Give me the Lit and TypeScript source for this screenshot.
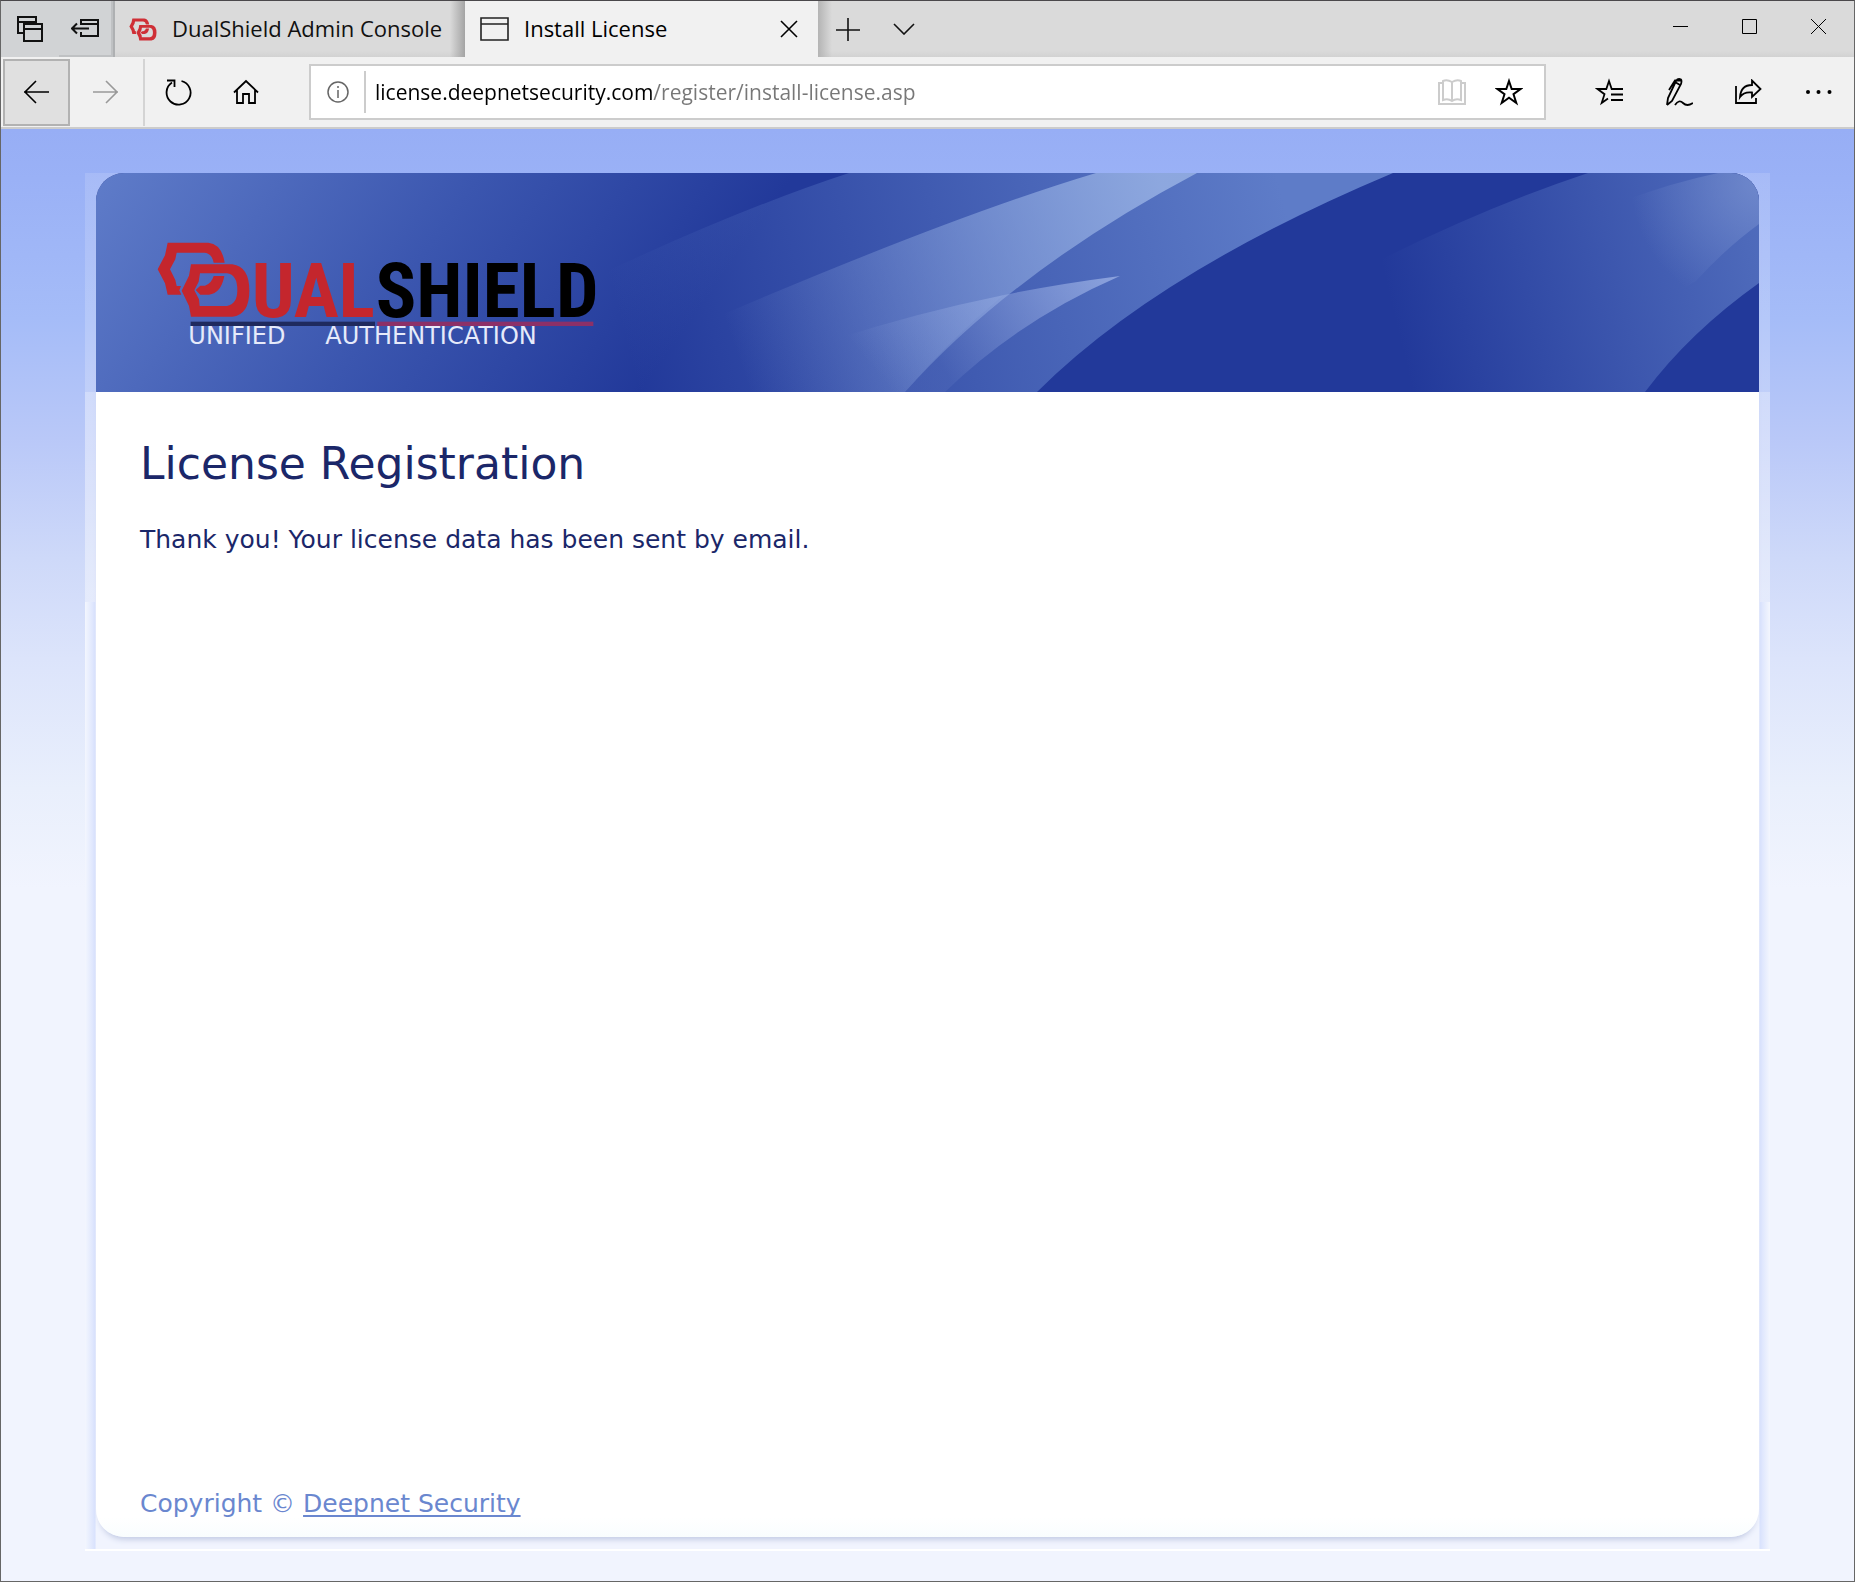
import { LitElement, html, css, svg } from "lit";
import { customElement } from "lit/decorators.js";

const hexPair = svg`
  <path fill-rule="evenodd" d="M68 38H190Q230 42 239 98H206Q200 69 178 68H95L91 88L75 118L91 150L95 168H108L103 181L109 194H68L60 160L38 118L60 76Z"/>
  <path d="M206 138H238Q228 190 192 194H166L152 180L166 167H180Q200 160 206 138Z"/>
  <path fill-rule="evenodd" d="M138 103H262Q313 110 313 182Q313 254 262 260H138L132 228L110 182L132 137ZM165 130L161 155L148 181L162 208L164 228H246Q277 222 277 181Q277 134 246 130Z"/>`;

@customElement("browser-chrome")
export class BrowserChrome extends LitElement {
  static styles = css`
    :host {
      display: block;
      font-family: "Open Sans", "Noto Sans", sans-serif;
      color: #111;
    }
    button {
      border: 0;
      padding: 0;
      margin: 0;
      background: none;
      color: inherit;
      font: inherit;
      display: flex;
      align-items: center;
      justify-content: center;
      flex: none;
    }
    svg {
      display: block;
      flex: none;
      fill: none;
      stroke: currentColor;
      stroke-width: 1.6;
    }
    .strip {
      display: flex;
      height: 56px;
      background: linear-gradient(#dadada 50px, #d2d2d2);
    }
    .shelf {
      display: flex;
      background: #d1d3d5;
      border-right: 2px solid #aeb0b2;
    }
    .shelf button {
      width: 58px;
    }
    .shelf .aside {
      box-sizing: border-box;
      width: 54px;
      border: solid #bfc1c3;
      border-width: 0 2px 2px 0;
    }
    .tab {
      display: flex;
      align-items: center;
      gap: 15px;
      width: 350px;
      box-sizing: border-box;
      padding: 0 14px;
      font-size: 22px;
      line-height: 30px;
      white-space: nowrap;
    }
    .tab.idle {
      background: linear-gradient(90deg, transparent 335px, #a4a4a4);
    }
    .tab.active {
      width: 353px;
      padding: 0 10px 0 15px;
      background: #f1f1f1;
      color: #000;
    }
    .tab .label {
      flex: 1;
      padding-bottom: 2px;
    }
    .tab .close {
      width: 38px;
      height: 38px;
    }
    .favicon {
      fill: #cf2f36;
      stroke: none;
    }
    .after {
      display: flex;
      flex: 1;
      padding-left: 2px;
      background: linear-gradient(90deg, #b4b4b4, transparent 14px);
    }
    .after button {
      width: 56px;
    }
    .window {
      display: flex;
      padding-right: 1px;
    }
    .window button {
      width: 69px;
      height: 50px;
    }
    .window svg {
      stroke-width: 1;
      color: #000;
    }
    .bar {
      display: flex;
      align-items: center;
      height: 70px;
      padding: 0 0 0 2px;
      background: #f1f1f1;
      border-bottom: 2px solid #ccc;
      color: #000;
    }
    .nav {
      width: 67px;
      height: 67px;
      box-sizing: border-box;
    }
    .back {
      background: #e0e0e0;
      border: 2px solid #b2b2b2;
    }
    .forward {
      width: 73px;
      color: #999;
    }
    .reload {
      border-left: 2px solid #d4d4d4;
      width: 67px;
    }
    .home {
      width: 71px;
    }
    .address {
      display: flex;
      align-items: center;
      flex: 1;
      height: 56px;
      box-sizing: border-box;
      margin: 0 28px;
      border: 2px solid #ccc;
      background: #fff;
    }
    .info {
      width: 53px;
      color: #666;
    }
    .rule {
      width: 2px;
      height: 42px;
      background: #ccc;
    }
    .url {
      flex: 1;
      min-width: 0;
      height: 40px;
      border: 0;
      outline: 0;
      padding: 0 0 0 9px;
      font-family: inherit;
      font-size: 21px;
      background: linear-gradient(90deg, #000 287px, #777 287px);
      background-clip: text;
      -webkit-background-clip: text;
      color: transparent;
    }
    .mark {
      width: 57px;
      height: 50px;
    }
    .reader {
      color: #ccc;
    }
    .star {
      margin-right: 7px;
    }
    .tool {
      width: 70px;
      height: 67px;
    }
    .dots {
      fill: currentColor;
      stroke: none;
    }
  `;

  render() {
    return html`
      <header>
        <div class="strip">
          <div class="shelf">
            <button aria-label="Tabs you have set aside">
              <svg width="26" height="26" viewBox="0 0 26 26"><path stroke-width="2" d="M6 17H1V1H19V7M1 6H19M7 8H25V25H7ZM7 13H25"/></svg>
            </button>
            <button class="aside" aria-label="Set these tabs aside">
              <svg width="28" height="20" viewBox="0 0 28 20"><path stroke-width="2" d="M10 7V2H27V18H10V14M10 6H27M1 10.500H18M6 5.500L1 10.500L6 15.500"/></svg>
            </button>
          </div>
          <div class="tab idle">
            <svg class="favicon" width="28" height="23" viewBox="34 34 284 230">${hexPair}</svg>
            <span class="label">DualShield Admin Console</span>
          </div>
          <div class="tab active">
            <svg width="29" height="24" viewBox="0 0 29 24"><path stroke="#222" d="M1 1H28V23H1ZM1 7H28"/></svg>
            <span class="label">Install License</span>
            <button class="close" aria-label="Close tab">
              <svg width="18" height="18" viewBox="0 0 18 18"><path d="M1 1L17 17M17 1L1 17"/></svg>
            </button>
          </div>
          <div class="after">
            <button aria-label="New tab">
              <svg width="24" height="24" viewBox="0 0 24 24"><path d="M12 1V24M0 13H24"/></svg>
            </button>
            <button aria-label="Tab previews">
              <svg width="22" height="12" viewBox="0 0 22 12"><path d="M1 1L11 11L21 1"/></svg>
            </button>
          </div>
          <div class="window">
            <button aria-label="Minimize">
              <svg width="15" height="15" viewBox="0 0 15 15"><path d="M0 7.500H15"/></svg>
            </button>
            <button aria-label="Maximize">
              <svg width="15" height="15" viewBox="0 0 15 15"><path d="M.5 .5H14.500V14.500H.5Z"/></svg>
            </button>
            <button aria-label="Close window">
              <svg width="15" height="15" viewBox="0 0 15 15"><path d="M0 0L15 15M15 0L0 15"/></svg>
            </button>
          </div>
        </div>
        <nav class="bar">
          <button class="nav back" aria-label="Back">
            <svg width="28" height="24" viewBox="0 0 28 24"><path d="M1 12H26M13 1L2 12L13 23"/></svg>
          </button>
          <button class="nav forward" aria-label="Forward">
            <svg width="28" height="24" viewBox="0 0 28 24"><path d="M0 12H25M13 1L24 12L13 23"/></svg>
          </button>
          <button class="nav reload" aria-label="Refresh">
            <svg width="28" height="28" viewBox="0 0 28 28"><path stroke-width="1.800" d="M17.500 3A12 12 0 1 1 8 4.600M3 2.500H10.500V9"/></svg>
          </button>
          <button class="nav home" aria-label="Home">
            <svg width="26" height="26" viewBox="0 0 26 26"><path stroke-width="1.800" d="M1 13.500L13 2L25 13.500M4 11V24H10V15H16V24H22V11"/></svg>
          </button>
          <div class="address">
            <button class="info" aria-label="Site information">
              <svg width="22" height="22" viewBox="0 0 22 22"><circle cx="11" cy="11" r="10" stroke-width="1.500"/><path stroke-width="1.500" d="M11 9V17M11 5V7"/></svg>
            </button>
            <span class="rule"></span>
            <input class="url" type="text" aria-label="Address" spellcheck="false" .value=${"license.deepnetsecurity.com/register/install-license.asp"} />
            <button class="mark reader" aria-label="Reading view">
              <svg width="28" height="26" viewBox="0 0 28 26"><path stroke-width="2" d="M14 3Q9 0 5 2V21Q10 19 14 22Q18 19 23 21V2Q19 0 14 3V22M5 4H1V25H27V4H23"/></svg>
            </button>
            <button class="mark star" aria-label="Add to favorites">
              <svg width="28" height="28" viewBox="0 0 28 28"><path stroke-width="2" d="M14 3L16.700 11H25.500L18.500 16.200L21.300 25L14 19.800L6.700 25L9.500 16.200L2.500 11H11.300Z"/></svg>
            </button>
          </div>
          <button class="tool" aria-label="Hub">
            <svg width="28" height="28" viewBox="0 0 28 28"><path stroke-width="1.800" d="M28 11H16.700L14 3L11.300 11H2.500L9.500 16.200L6.700 25L13 20.500M16 16.500H28M16 22H28"/></svg>
          </button>
          <button class="tool" aria-label="Make a web note">
            <svg width="28" height="30" viewBox="0 0 28 30"><path stroke-width="1.800" d="M2 28L3 21L11 4Q13 1 16 2.500Q17 4 16 7L7 24L2 28M4 13L10 3.500H16M10 5L15 8M10 28Q14 22 18 26T28 26"/></svg>
          </button>
          <button class="tool" aria-label="Share">
            <svg width="30" height="26" viewBox="0 0 30 26"><path stroke-width="1.800" d="M2 7V24H22V19M6 18Q7 6 18 6V1.500L26.500 10L18 18V13.500Q10 12.500 6 18Z"/></svg>
          </button>
          <button class="tool" aria-label="Settings and more">
            <svg class="dots" width="26" height="4" viewBox="0 0 26 4"><circle cx="2" cy="2" r="2"/><circle cx="12.500" cy="2" r="2"/><circle cx="23.500" cy="2" r="2"/></svg>
          </button>
        </nav>
      </header>
    `;
  }
}

@customElement("dualshield-banner")
export class DualShieldBanner extends LitElement {
  static styles = css`
    :host {
      display: block;
      position: relative;
      height: 219px;
      border-radius: 28px 28px 0 0;
      overflow: hidden;
      background: #22399a;
    }
    .art {
      display: block;
      width: 100%;
      height: 100%;
    }
    .logo {
      position: absolute;
      left: 49px;
      top: 57px;
    }
    .red {
      fill: #c4262d;
    }
    .word {
      font-family: "Roboto Condensed", "Liberation Sans Narrow", "Liberation Sans", sans-serif;
      font-weight: 700;
      font-size: 226px;
    }
    .sub {
      font-family: "DejaVu Sans", sans-serif;
      font-size: 72px;
      fill: #e6eafa;
    }
  `;

  render() {
    return html`
      <svg class="art" viewBox="0 0 1663 219" preserveAspectRatio="xMidYMid slice" aria-hidden="true">
        <defs>
          <linearGradient id="base" gradientUnits="userSpaceOnUse" x1="0" y1="0" x2="466" y2="330">
            <stop offset="0" stop-color="#5f7cc9"/>
            <stop offset=".55" stop-color="#3b56af"/>
            <stop offset="1" stop-color="#22399a"/>
          </linearGradient>
          <linearGradient id="outer" gradientUnits="userSpaceOnUse" x1="530" y1="170" x2="1180" y2="0">
            <stop offset="0" stop-color="#5e7dc8" stop-opacity="0"/>
            <stop offset=".55" stop-color="#5e7dc8" stop-opacity=".56"/>
            <stop offset="1" stop-color="#5e7cc8"/>
          </linearGradient>
          <linearGradient id="inner" gradientUnits="userSpaceOnUse" x1="630" y1="150" x2="1060" y2="0">
            <stop offset="0" stop-color="#90aae0" stop-opacity="0"/>
            <stop offset="1" stop-color="#90aae0" stop-opacity=".95"/>
          </linearGradient>
          <linearGradient id="horn" gradientUnits="userSpaceOnUse" x1="785" y1="205" x2="900" y2="110">
            <stop offset="0" stop-color="#a8bcec" stop-opacity="0"/>
            <stop offset="1" stop-color="#a8bcec" stop-opacity=".42"/>
          </linearGradient>
          <linearGradient id="horn2" gradientUnits="userSpaceOnUse" x1="850" y1="200" x2="1010" y2="100">
            <stop offset="0" stop-color="#a8bcec" stop-opacity=".08"/>
            <stop offset="1" stop-color="#a8bcec" stop-opacity=".66"/>
          </linearGradient>
          <linearGradient id="right" gradientUnits="userSpaceOnUse" x1="1290" y1="110" x2="1663" y2="20">
            <stop offset="0" stop-color="#5572c0" stop-opacity="0"/>
            <stop offset="1" stop-color="#5572c0" stop-opacity=".9"/>
          </linearGradient>
          <radialGradient id="corner" gradientUnits="userSpaceOnUse" cx="1663" cy="10" r="128">
            <stop offset="0" stop-color="#7890d0" stop-opacity=".75"/>
            <stop offset="1" stop-color="#7890d0" stop-opacity="0"/>
          </radialGradient>
        </defs>
        <rect width="1663" height="219" fill="url(#base)"/>
        <path fill="url(#outer)" d="M753 0Q640 37 490 108L400 219H941Q1061 99 1297 0Z"/>
        <path fill="url(#inner)" d="M1000 0Q850 45 600 153V219H809Q918 97 1101 0Z"/>
        <path fill="url(#horn)" d="M908 122Q820 140 740 166V219H809Q854 166 908 122Z"/>
        <path fill="url(#horn2)" d="M1024 103Q962 111 908 122Q854 166 809 219H849Q923 147 1024 103Z"/>
        <path fill="url(#right)" d="M1492 0Q1390 34 1280 89V219H1549Q1594 159 1663 110V0Z"/>
        <path fill="url(#corner)" d="M1622 0Q1575 10 1530 27V150L1600 108Q1630 75 1663 51V0Z"/>
      </svg>
      <svg class="logo" width="480" height="130" viewBox="0 0 1440 390" role="img" aria-label="DualShield Unified Authentication">
        <g class="red">${hexPair}</g>
        <text class="word red" x="320" y="260">UAL</text>
        <text class="word" x="692" y="260">SHIELD</text>
        <rect x="137" y="275" width="553" height="13" fill="#1f2a5e"/>
        <rect x="697" y="275" width="648" height="13" fill="#8c3068"/>
        <text class="sub" x="130" y="343">UNIFIED</text>
        <text class="sub" x="541" y="343">AUTHENTICATION</text>
      </svg>
    `;
  }
}

@customElement("app-root")
export class AppRoot extends LitElement {
  static styles = css`
    :host {
      display: flex;
      flex-direction: column;
      min-height: 100vh;
      box-sizing: border-box;
      border: 1px solid #666;
      border-top-color: #4a484b;
      font-family: Verdana, "DejaVu Sans", sans-serif;
      color: #1b2769;
    }
    .page {
      flex: 1;
      display: flex;
      flex-direction: column;
      padding: 44px 84px 30px;
      background: linear-gradient(#97aef5 0, #9ab1f6 50px, #a5bcf8 190px, #b9c8f8 310px, #ced9f9 430px, #dce4fb 530px, #e9effc 660px, #f1f4fe 760px);
    }
    .frame {
      flex: 1;
      display: flex;
      flex-direction: column;
      padding: 0 11px 12px;
      border-bottom: 2px solid #fff;
      background:
        linear-gradient(90deg, #f3f6fe, #d9e2fd 10px, #eef2fe 11px, transparent 11px) 0 429px / 12px 100% no-repeat,
        linear-gradient(270deg, #f3f6fe, #d9e2fd 10px, #eef2fe 11px, transparent 11px) 100% 429px / 12px 100% no-repeat,
        linear-gradient(#fff6, #fff6) 0 219px / 100% 210px no-repeat,
        linear-gradient(#fff2, #fff3) 0 0 / 100% 219px no-repeat;
    }
    .card {
      flex: 1;
      display: flex;
      flex-direction: column;
      border-radius: 28px;
      background: linear-gradient(0deg, #f9fdfe, #fff 20px);
      box-shadow: 0 6px 6px -4px #bcc5e0;
    }
    main {
      flex: 1;
      padding: 45px 44px 44px;
    }
    h1 {
      margin: 0;
      font-size: 44px;
      line-height: 54px;
      font-weight: 400;
    }
    p {
      margin: 0;
      font-size: 25px;
      line-height: 32px;
    }
    .message {
      margin-top: 33px;
    }
    .copyright {
      padding: 0 44px 17px;
      color: #6a87cf;
    }
    a {
      color: inherit;
      text-decoration-thickness: 2px;
      text-underline-offset: 3px;
      text-decoration-skip-ink: none;
    }
  `;

  render() {
    return html`
      <browser-chrome></browser-chrome>
      <div class="page">
        <div class="frame">
          <div class="card">
            <dualshield-banner></dualshield-banner>
            <main>
              <h1>License Registration</h1>
              <p class="message">Thank you! Your license data has been sent by email.</p>
            </main>
            <footer class="copyright">
              <p>Copyright © <a href="#">Deepnet Security</a></p>
            </footer>
          </div>
        </div>
      </div>
    `;
  }
}
